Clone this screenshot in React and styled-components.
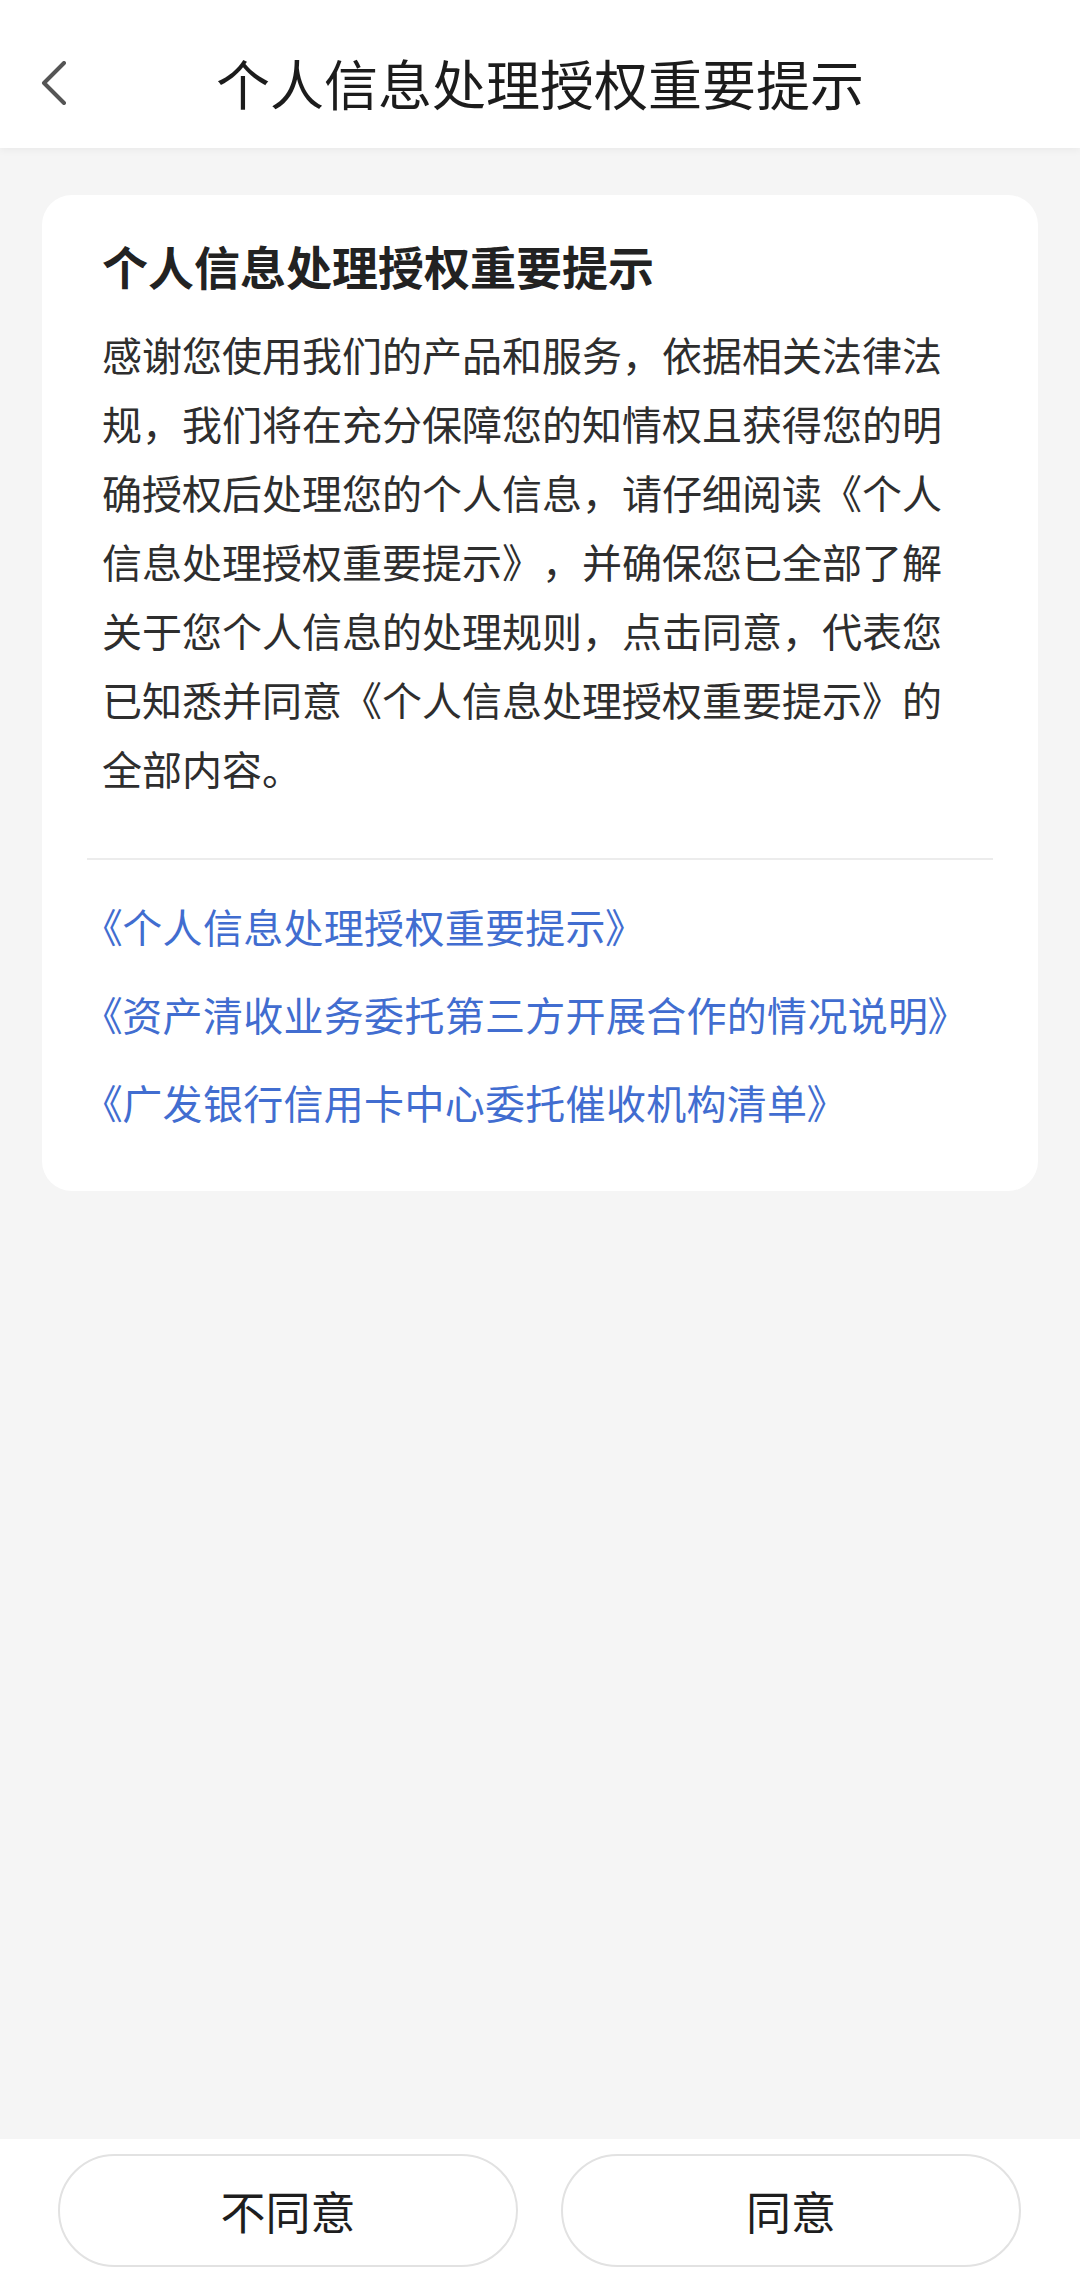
import React from "react";
import styled, { createGlobalStyle } from "styled-components";

const Global = createGlobalStyle`
  html, body { margin: 0; padding: 0; }
  body {
    background: #f5f5f5;
    font-family: "Noto Sans CJK SC", "Noto Sans", sans-serif;
    -webkit-font-smoothing: antialiased;
  }
  * { box-sizing: border-box; }
`;

const Page = styled.div`
  min-height: 100vh;
  display: flex;
  flex-direction: column;
  background: #f5f5f5;
`;

const Header = styled.header`
  height: 148px;
  padding-top: 18px;
  background: #ffffff;
  display: grid;
  grid-template-columns: 1fr auto 1fr;
  align-items: center;
  box-shadow: 0 2px 8px rgba(0, 0, 0, 0.05);
  position: relative;
  z-index: 1;
`;

const BackButton = styled.button`
  justify-self: start;
  margin-left: 41px;
  padding: 0;
  border: none;
  background: none;
  display: flex;
  align-items: center;
  cursor: pointer;
`;

const Title = styled.h1`
  margin: 0;
  font-size: 54px;
  font-weight: 400;
  line-height: 1.2;
  color: #1c1c1c;
  white-space: nowrap;
`;

const Main = styled.main`
  flex: 1;
  padding: 47px 42px;
`;

const Card = styled.section`
  background: #ffffff;
  border-radius: 30px;
  padding: 40px 45px 59px;
`;

const Intro = styled.div`
  padding: 0 15px;
`;

const Heading = styled.h2`
  margin: 0 0 25px;
  font-size: 46px;
  line-height: 60px;
  font-weight: 700;
  color: #222222;
`;

const Body = styled.p`
  margin: 0;
  font-size: 40px;
  line-height: 69px;
  color: #2e2e2e;
  text-spacing-trim: space-all;
  font-feature-settings: normal;
`;

const Divider = styled.hr`
  margin: 55px 0 0;
  border: none;
  border-top: 2px solid #ececec;
`;

const LinkList = styled.div`
  display: flex;
  flex-direction: column;
  gap: 28px;
  padding: 36px 15px 0;
`;

const DocLink = styled.a`
  display: block;
  font-size: 40px;
  line-height: 60px;
  letter-spacing: 0.3px;
  color: #416dd0;
  text-decoration: none;
  font-feature-settings: "palt";
  white-space: nowrap;
`;

const Footer = styled.footer`
  height: 144px;
  background: #ffffff;
  padding: 15px 59px 16px 58px;
  display: grid;
  grid-template-columns: 1fr 1fr;
  gap: 43px;
`;

const ActionButton = styled.button`
  height: 113px;
  border: 2px solid #e2e2e2;
  border-radius: 57px;
  background: #ffffff;
  font-family: "Noto Sans CJK SC", "Noto Sans", sans-serif;
  font-size: 45px;
  color: #1e1e1e;
  cursor: pointer;
`;

const links = [
  "《个人信息处理授权重要提示》",
  "《资产清收业务委托第三方开展合作的情况说明》",
  "《广发银行信用卡中心委托催收机构清单》",
];

export default function App() {
  return (
    <Page>
      <Global />
      <Header>
        <BackButton aria-label="返回">
          <svg width="26" height="44" viewBox="0 0 26 44" fill="none">
            <polyline
              points="23,2 3,22 23,42"
              stroke="#555555"
              strokeWidth="4"
              strokeLinecap="round"
              strokeLinejoin="round"
            />
          </svg>
        </BackButton>
        <Title>个人信息处理授权重要提示</Title>
        <span />
      </Header>
      <Main>
        <Card>
          <Intro>
            <Heading>个人信息处理授权重要提示</Heading>
            <Body>
              感谢您使用我们的产品和服务，依据相关法律法规，我们将在充分保障您的知情权且获得您的明确授权后处理您的个人信息，请仔细阅读《个人信息处理授权重要提示》，并确保您已全部了解关于您个人信息的处理规则，点击同意，代表您已知悉并同意《个人信息处理授权重要提示》的全部内容。
            </Body>
          </Intro>
          <Divider />
          <LinkList>
            {links.map((l) => (
              <DocLink key={l} href="#">
                {l}
              </DocLink>
            ))}
          </LinkList>
        </Card>
      </Main>
      <Footer>
        <ActionButton>不同意</ActionButton>
        <ActionButton>同意</ActionButton>
      </Footer>
    </Page>
  );
}
